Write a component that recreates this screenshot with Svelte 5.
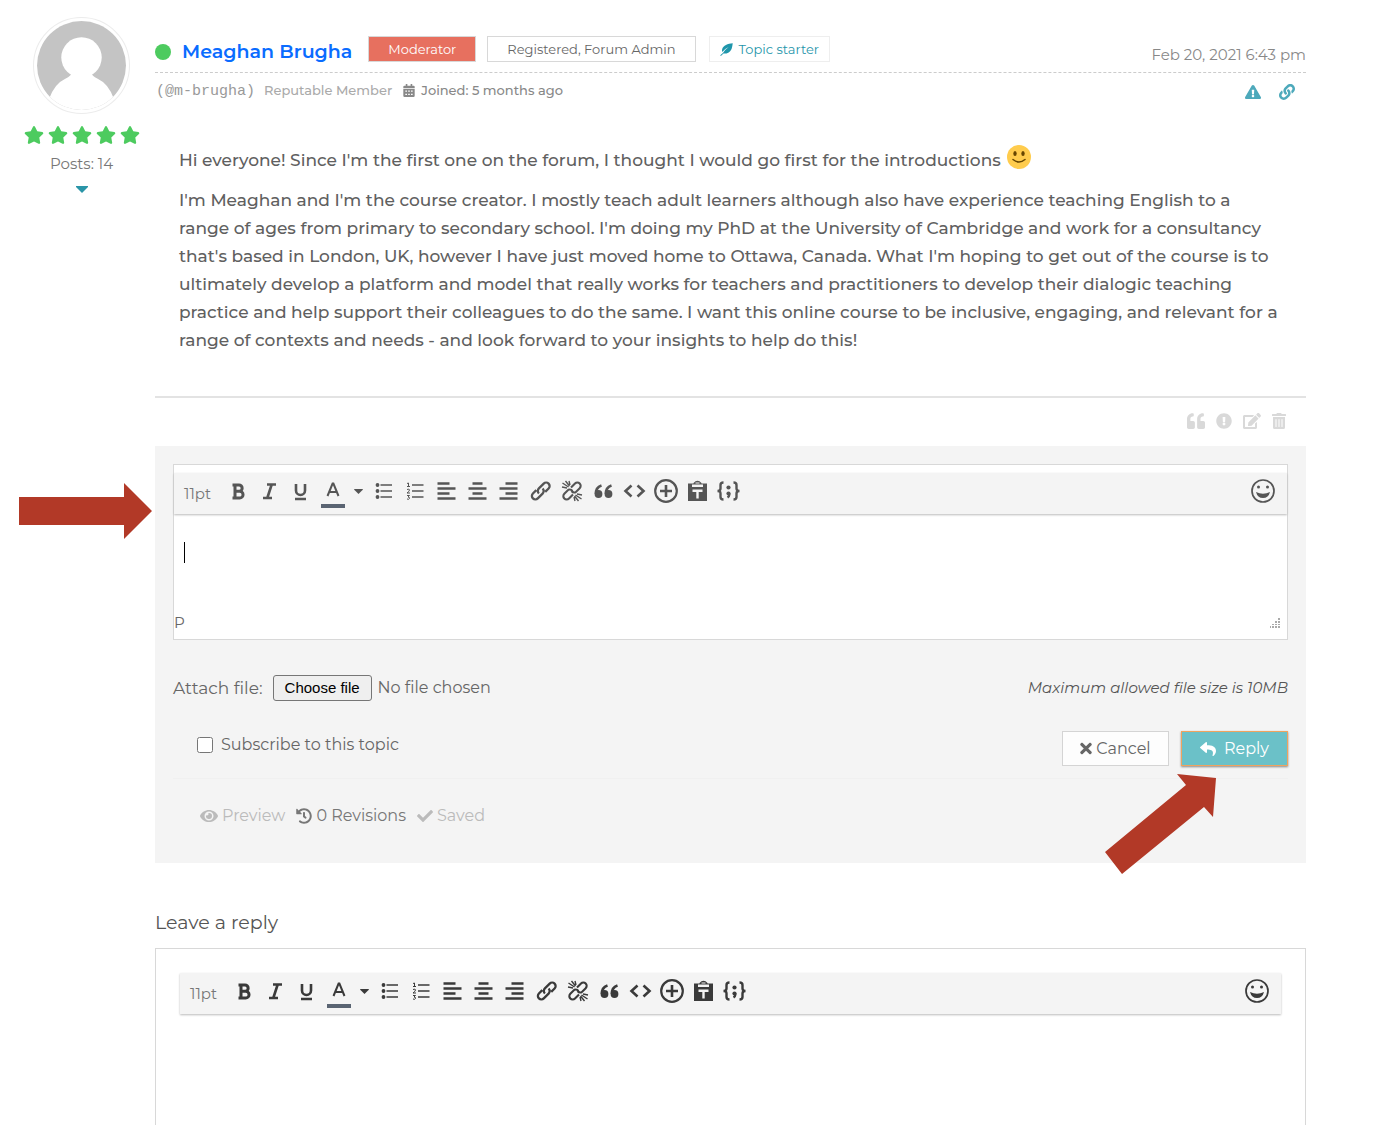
<script>
  let subscribed = $state(false);
  let message = $state('');
  let draft = $state('');
  let fileName = $state('No file chosen');

  const paths = {
    star: ['0 0 576 512', 'M259.3 17.8L194 150.2 47.9 171.5c-26.2 3.8-36.7 36.1-17.7 54.6l105.7 103-25 145.5c-4.5 26.3 23.2 46 46.4 33.7L288 439.6l130.7 68.7c23.2 12.2 50.9-7.4 46.4-33.7l-25-145.5 105.7-103c19-18.5 8.5-50.8-17.7-54.6L382 150.2 316.7 17.8c-11.7-23.6-45.6-23.9-57.4 0z'],
    link: ['0 0 512 512', 'M326.612 185.391c59.747 59.809 58.927 155.698.36 214.59-.11.12-.24.25-.36.37l-67.2 67.2c-59.27 59.27-155.699 59.262-214.96 0-59.27-59.26-59.27-155.7 0-214.96l37.106-37.106c9.84-9.84 26.786-3.3 27.294 10.606.648 17.722 3.826 35.527 9.69 52.721 1.986 5.822.567 12.262-3.783 16.612l-13.087 13.087c-28.026 28.026-28.905 73.66-1.155 101.96 28.024 28.579 74.086 28.749 102.325.51l67.2-67.19c28.191-28.191 28.073-73.757 0-101.83-3.701-3.694-7.429-6.564-10.341-8.569a16.037 16.037 0 0 1-6.947-12.606c-.396-10.567 3.348-21.456 11.698-29.806l21.054-21.055c5.521-5.521 14.182-6.199 20.584-1.731a152.482 152.482 0 0 1 20.522 17.197zM467.547 44.449c-59.261-59.262-155.69-59.27-214.96 0l-67.2 67.2c-.12.12-.25.25-.36.37-58.566 58.892-59.387 154.781.36 214.59a152.454 152.454 0 0 0 20.521 17.196c6.402 4.468 15.064 3.789 20.584-1.731l21.054-21.055c8.35-8.35 12.094-19.239 11.698-29.806a16.037 16.037 0 0 0-6.947-12.606c-2.912-2.005-6.64-4.875-10.341-8.569-28.073-28.073-28.191-73.639 0-101.83l67.2-67.19c28.239-28.239 74.3-28.069 102.325.51 27.75 28.3 26.872 73.934-1.155 101.96l-13.087 13.087c-4.35 4.35-5.769 10.79-3.783 16.612 5.864 17.194 9.042 34.999 9.69 52.721.509 13.906 17.454 20.446 27.294 10.606l37.106-37.106c59.271-59.259 59.271-155.699.001-214.959z'],
    warning: ['0 0 576 512', 'M569.517 440.013C587.975 472.007 564.806 512 527.94 512H48.054c-36.937 0-59.999-40.055-41.577-71.987L246.423 23.985c18.467-32.009 64.72-31.951 83.154 0l239.94 416.028zM288 354c-25.405 0-46 20.595-46 46s20.595 46 46 46 46-20.595 46-46-20.595-46-46-46zm-43.673-165.346l7.418 136c.347 6.364 5.609 11.346 11.982 11.346h48.546c6.373 0 11.635-4.982 11.982-11.346l7.418-136c.375-6.874-5.098-12.654-11.982-12.654h-63.383c-6.884 0-12.356 5.78-11.981 12.654z'],
    quote: ['0 0 512 512', 'M464 256h-80v-64c0-35.3 28.7-64 64-64h8c13.3 0 24-10.7 24-24V56c0-13.3-10.7-24-24-24h-8c-88.4 0-160 71.6-160 160v240c0 26.5 21.5 48 48 48h128c26.5 0 48-21.5 48-48V304c0-26.5-21.5-48-48-48zm-288 0H96v-64c0-35.3 28.7-64 64-64h8c13.3 0 24-10.7 24-24V56c0-13.3-10.7-24-24-24h-8C71.6 32 0 103.6 0 192v240c0 26.5 21.5 48 48 48h128c26.5 0 48-21.5 48-48V304c0-26.5-21.5-48-48-48z'],
    report: ['0 0 512 512', 'M504 256c0 136.997-111.043 248-248 248S8 392.997 8 256C8 119.083 119.043 8 256 8s248 111.083 248 248zm-248 50c-25.405 0-46 20.595-46 46s20.595 46 46 46 46-20.595 46-46-20.595-46-46-46zm-43.673-165.346l7.418 136c.347 6.364 5.609 11.346 11.982 11.346h48.546c6.373 0 11.635-4.982 11.982-11.346l7.418-136c.375-6.874-5.098-12.654-11.982-12.654h-63.383c-6.884 0-12.356 5.78-11.981 12.654z'],
    edit: ['0 0 576 512', 'M402.6 83.2l90.2 90.2c3.8 3.8 3.8 10 0 13.8L274.4 405.6l-92.8 10.3c-12.4 1.4-22.9-9.1-21.5-21.5l10.3-92.8L388.8 83.2c3.8-3.8 10-3.8 13.8 0zm162-22.9l-48.8-48.8c-15.2-15.2-39.9-15.2-55.2 0l-35.4 35.4c-3.8 3.8-3.8 10 0 13.8l90.2 90.2c3.8 3.8 10 3.8 13.8 0l35.4-35.4c15.2-15.3 15.2-40 0-55.2zM384 346.2V448H64V128h229.8c3.2 0 6.2-1.3 8.5-3.5l40-40c7.6-7.6 2.2-20.5-8.5-20.5H48C21.5 64 0 85.5 0 112v352c0 26.5 21.5 48 48 48h352c26.5 0 48-21.5 48-48V306.2c0-10.7-12.9-16-20.5-8.5l-40 40c-2.2 2.3-3.5 5.3-3.5 8.5z'],
    trash: ['0 0 448 512', 'M32 464a48 48 0 0 0 48 48h288a48 48 0 0 0 48-48V128H32zm272-256a16 16 0 0 1 32 0v224a16 16 0 0 1-32 0zm-96 0a16 16 0 0 1 32 0v224a16 16 0 0 1-32 0zm-96 0a16 16 0 0 1 32 0v224a16 16 0 0 1-32 0zM432 32H312l-9.4-18.7A24 24 0 0 0 281.1 0H166.8a23.72 23.72 0 0 0-21.4 13.3L136 32H16A16 16 0 0 0 0 48v32a16 16 0 0 0 16 16h416a16 16 0 0 0 16-16V48a16 16 0 0 0-16-16z'],
    eye: ['0 0 576 512', 'M572.52 241.4C518.29 135.59 410.93 64 288 64S57.68 135.64 3.48 241.41a32.35 32.35 0 0 0 0 29.19C57.71 376.41 165.07 448 288 448s230.32-71.64 284.52-177.41a32.35 32.35 0 0 0 0-29.19zM288 400a144 144 0 1 1 144-144 143.93 143.93 0 0 1-144 144zm0-240a95.31 95.31 0 0 0-25.31 3.79 47.85 47.85 0 0 1-66.9 66.9A95.78 95.78 0 1 0 288 160z'],
    history: ['0 0 512 512', 'M504 255.531c.253 136.64-111.18 248.372-247.82 248.468-59.015.042-113.223-20.53-155.822-54.911-11.077-8.94-11.905-25.541-1.839-35.607l11.267-11.267c8.609-8.609 22.353-9.551 31.891-1.984C173.062 425.135 212.781 440 256 440c101.705 0 184-82.311 184-184 0-101.705-82.311-184-184-184-48.814 0-93.149 18.969-126.068 49.932l50.754 50.754c10.08 10.08 2.941 27.314-11.313 27.314H24c-8.837 0-16-7.163-16-16V38.627c0-14.254 17.234-21.393 27.314-11.314l49.372 49.372C129.209 34.136 189.552 8 256 8c136.81 0 247.747 110.78 248 247.531zm-180.912 78.784l9.823-12.63c8.138-10.463 6.253-25.542-4.21-33.679L288 256.349V152c0-13.255-10.745-24-24-24h-16c-13.255 0-24 10.745-24 24v135.651l65.409 50.874c10.463 8.137 25.541 6.253 33.679-4.21z'],
    check: ['0 0 512 512', 'M173.898 439.404l-166.4-166.4c-9.997-9.997-9.997-26.206 0-36.204l36.203-36.204c9.997-9.998 26.207-9.998 36.204 0L192 312.69 432.095 72.596c9.997-9.997 26.207-9.997 36.204 0l36.203 36.204c9.997 9.997 9.997 26.206 0 36.204l-294.4 294.401c-9.998 9.997-26.207 9.997-36.204-.001z'],
    times: ['0 60 352 392', 'M242.72 256l100.07-100.07c12.28-12.28 12.28-32.19 0-44.48l-22.24-22.24c-12.28-12.28-32.19-12.28-44.48 0L176 189.28 75.93 89.21c-12.28-12.28-32.19-12.28-44.48 0L9.21 111.45c-12.28 12.28-12.28 32.19 0 44.48L109.28 256 9.21 356.07c-12.28 12.28-12.28 32.19 0 44.48l22.24 22.24c12.28 12.28 32.2 12.28 44.48 0L176 322.72l100.07 100.07c12.28 12.28 32.2 12.28 44.48 0l22.24-22.24c12.28-12.28 12.28-32.19 0-44.48L242.72 256z'],
    reply: ['0 0 512 512', 'M8.309 189.836L184.313 37.851C199.719 24.546 224 35.347 224 56.015v80.053c160.629 1.839 288 34.032 288 186.258 0 61.441-39.581 122.309-83.333 154.132-13.653 9.931-33.111-2.533-28.077-18.631 45.344-145.012-21.507-183.51-176.59-185.742V360c0 20.7-24.3 31.453-39.687 18.164l-176.004-152c-11.071-9.562-11.086-26.753 0-36.328z'],
    calendar: ['0 0 14 16', 'M3 0h2v2h4V0h2v2h1.500a1.500 1.500 0 0 1 1.500 1.500V5H0V3.500A1.500 1.500 0 0 1 1.500 2H3zM0 5.800h14v8.700a1.500 1.500 0 0 1-1.500 1.500h-11A1.500 1.500 0 0 1 0 14.500zM2.500 8v1.500h2V8zM6 8v1.500h2V8zM9.500 8v1.500h2V8zM2.500 12v1.500h2V12zM6 12v1.500h2V12zM9.500 12v1.500h2V12z'],
    feather: ['0 0 16 16', 'M15.700.3C9.500.8 4 3 2.700 7.300q-.6 2 .1 3.900Q6 7 10.700 5 6.500 8 3.600 12.200L.3 15.200l.8.8 3.200-3.200C10 14.200 13.500 10 14.500 6.500q.8-3 1.200-6.200z'],
    caret: ['0 0 12 7', 'M0 0h12v1L6 7 0 1z']
  };

  const tools = ['Bullet list', 'Numbered list', 'Align left', 'Align center', 'Align right', 'Insert link', 'Remove link', 'Blockquote', 'Code', 'Spoiler', 'Paste as text', 'Source code'];

  const postActions = [
    ['quote', 'Quote'],
    ['report', 'Report'],
    ['edit', 'Edit'],
    ['trash', 'Delete']
  ];

  function pickFile(event) {
    fileName = event.currentTarget.files[0]?.name ?? 'No file chosen';
  }
</script>

{#snippet icon(name)}
  <svg class="icon icon-{name}" viewBox={paths[name][0]} aria-hidden="true"><path fill-rule="evenodd" d={paths[name][1]} /></svg>
{/snippet}

{#snippet toolIcon(name)}
  <svg class="tool" viewBox="0 0 24 24" fill="none" stroke="currentColor" stroke-width="2" aria-hidden="true">
    {#if name === 'Bold'}
      <path stroke-width="3" d="M8 5.500v14M5.500 6h6.500a3 3 0 0 1 0 6.300H8M8 12.300h4.700a3.300 3.300 0 0 1 0 6.700H5.500" />
    {:else if name === 'Italic'}
      <path stroke-width="2.600" d="M9 5.500h9M5 19h9M13.700 5.500l-4.400 13.500" />
    {:else if name === 'Underline'}
      <path stroke-width="2.600" d="M7 5v6.500a4.500 4.500 0 0 0 9 0V5M6 20h11" />
    {:else if name === 'Text color'}
      <path d="M6.500 18L11.600 5.500h.8L17.500 18M8.500 14h7" />
    {:else if name === 'Bullet list'}
      <path stroke-width="1.500" d="M8.500 6h11.500M8.500 12h11.500M8.500 18h11.500" />
      <g fill="currentColor" stroke="none"><circle cx="5.500" cy="6" r="1.900" /><circle cx="5.500" cy="12" r="1.900" /><circle cx="5.500" cy="18" r="1.900" /></g>
    {:else if name === 'Numbered list'}
      <path stroke-width="1.500" d="M9 6h11.500M9 12h11.500M9 18h11.500" />
      <path stroke-width="1" d="M4 4.500L5.500 4v3.500M4 7.500h3M4 10.500q2.500-1 2.500.400T4 14h3M4 16.500h2.500L5 18q2 .2 1.500 1.500T4 20" />
    {:else if name === 'Align left'}
      <path stroke-width="2.300" d="M2.500 4.500h12M2.500 9.500h18M2.500 14.500h12M2.500 19.500h18" />
    {:else if name === 'Align center'}
      <path stroke-width="2.300" d="M6.500 4.500h10M2.500 9.500h18M6.500 14.500h10M2.500 19.500h18" />
    {:else if name === 'Align right'}
      <path stroke-width="2.300" d="M8.500 4.500h12M2.500 9.500h18M8.500 14.500h12M2.500 19.500h18" />
    {:else if name === 'Insert link'}
      <path stroke-width="2.300" d="M9.900 14.500a3.600 3.600 0 0 1 0-5.100l4.800-4.800a3.400 3.400 0 0 1 4.900 4.900l-3.400 3.400M13.600 9.500a3.600 3.600 0 0 1 0 5.100l-4.800 4.800a3.400 3.400 0 0 1-4.900-4.900l3.400-3.400" />
    {:else if name === 'Remove link'}
      <path stroke-width="2.100" d="M11 8.500l4-4a3.200 3.200 0 0 1 4.700 4.700l-4 4q-2.500 1-4.200-1.200M13 15.500l-4 4a3.200 3.200 0 0 1-4.700-4.700l4-4q2.500-1 4.200 1.200" />
      <path stroke-width="1.400" d="M2.500 4l6 4M5.500 2l4 5M9 2l1 4M2 8l5 1M21.500 20l-6-4M18.500 22l-4-5M15 22l-1-4M22 16l-5-1" />
    {:else if name === 'Blockquote'}
      <g fill="currentColor" stroke="none"><circle cx="6.500" cy="15" r="3.900" /><circle cx="16.500" cy="15" r="3.900" /></g>
      <path stroke-width="2.600" d="M4 15Q3.500 8.500 9.500 6.500M14 15Q13.500 8.500 19.500 6.500" />
    {:else if name === 'Code'}
      <path stroke-width="2.600" d="M8.500 6.500L2.500 12l6 5.500M14.500 6.500l6 5.500-6 5.500" />
    {:else if name === 'Spoiler'}
      <circle cx="12" cy="12" r="10.800" stroke-width="2.200" /><path stroke-width="2.600" d="M12 6v12M6 12h12" />
    {:else if name === 'Paste as text'}
      <path fill="currentColor" stroke="none" fill-rule="evenodd" d="M2 4.500h5.500V4q4-4.500 8 0v.5H21V22H2zM9.500 3.500v1h4v-1zM6 5.500v2.500h11V5.500zM6.500 10.500V13h3.800v6.500h2.400V13h3.800v-2.500z" />
    {:else if name === 'Source code'}
      <path stroke-width="2.400" d="M6.500 3.500Q3.500 3.500 3.500 6v3.500Q3.500 12 .5 12q3 0 3 2.500V18q0 2.500 3 2.500M16.500 3.500q3 0 3 2.500v3.500q0 2.500 3 2.500-3 0-3 2.500V18q0 2.500-3 2.500M12.200 14.500v1.500q0 1.500-1.700 2.500" />
      <g fill="currentColor" stroke="none"><circle cx="11.500" cy="8.500" r="2.100" /><circle cx="11.500" cy="14.500" r="2.100" /></g>
    {:else if name === 'Emoticons'}
      <circle cx="12" cy="12" r="11" stroke-width="1.700" />
      <g fill="currentColor" stroke="none"><circle cx="7.500" cy="8" r="1.500" /><circle cx="16.500" cy="8" r="1.500" /><path d="M5 13q7 3.500 14 0-1.500 6-7 6t-7-6z" /></g>
    {/if}
  </svg>
{/snippet}

{#snippet toolbar()}
  <div class="toolbar" role="toolbar" aria-label="Text formatting">
    <button type="button" class="size">11pt</button>
    <div class="styles">
      {#each ['Bold', 'Italic', 'Underline'] as name}
        <button type="button" aria-label={name}>{@render toolIcon(name)}</button>
      {/each}
    </div>
    <button type="button" class="color" aria-label="Text color">{@render toolIcon('Text color')}</button>
    <button type="button" class="more" aria-label="Choose text color">{@render icon('caret')}</button>
    <div class="tools">
      {#each tools as name}
        <button type="button" aria-label={name}>{@render toolIcon(name)}</button>
      {/each}
    </div>
    <button type="button" class="emoticons" aria-label="Emoticons">{@render toolIcon('Emoticons')}</button>
  </div>
{/snippet}

<main>
  <aside>
    <svg class="avatar" viewBox="0 0 96 96" role="img" aria-label="Avatar">
      <defs><clipPath id="avatar-clip"><circle cx="48" cy="48" r="44" /></clipPath></defs>
      <circle cx="48" cy="48" r="47.500" fill="#fff" stroke="#ececec" />
      <g clip-path="url(#avatar-clip)">
        <path fill="#c4c4c4" d="M0 0h96v96H0z" />
        <ellipse cx="48" cy="40" rx="20" ry="20" fill="#fff" />
        <path fill="#fff" d="M38 54h20q-1 4 6 7 11 5 16 20l4 19H12l4-19q5-15 16-20 7-3 6-7z" />
      </g>
    </svg>
    <div class="stars" role="img" aria-label="5 stars">
      {#each Array(5) as _}{@render icon('star')}{/each}
    </div>
    <span class="posts">Posts: 14</span>
    <button type="button" class="expand" aria-label="Show author details">{@render icon('caret')}</button>
  </aside>

  <div class="column">
    <article>
      <header>
        <span class="online"></span>
        <a class="name" href="#profile">Meaghan Brugha</a>
        <span class="badge moderator">Moderator</span>
        <span class="badge">Registered, Forum Admin</span>
        <span class="badge starter">{@render icon('feather')}Topic starter</span>
        <time datetime="2021-02-20T18:43">Feb 20, 2021 6:43 pm</time>
      </header>
      <div class="meta">
        <span class="handle">(@m-brugha)</span>
        <span>Reputable Member</span>
        <span class="joined">{@render icon('calendar')}Joined: 5 months ago</span>
        <div class="links">
          <a href="#report" aria-label="Report post">{@render icon('warning')}</a>
          <a href="#post" aria-label="Link to post">{@render icon('link')}</a>
        </div>
      </div>
      <div class="body">
        <p>
          Hi everyone! Since I'm the first one on the forum, I thought I would go first for the introductions
          <svg class="emoji" viewBox="0 0 24 24" role="img" aria-label="Smile"><circle cx="12" cy="12" r="12" fill="#ffcc4d" /><ellipse cx="8" cy="8.500" rx="1.700" ry="2.500" fill="#664500" /><ellipse cx="16" cy="8.500" rx="1.700" ry="2.500" fill="#664500" /><path d="M6 14.500q6 5 12 0" fill="none" stroke="#664500" stroke-width="1.500" stroke-linecap="round" /></svg>
        </p>
        <p>
          I'm Meaghan and I'm the course creator. I mostly teach adult learners although also have experience teaching English to a<br />
          range of ages from primary to secondary school. I'm doing my PhD at the University of Cambridge and work for a consultancy<br />
          that's based in London, UK, however I have just moved home to Ottawa, Canada. What I'm hoping to get out of the course is to<br />
          ultimately develop a platform and model that really works for teachers and practitioners to develop their dialogic teaching<br />
          practice and help support their colleagues to do the same. I want this online course to be inclusive, engaging, and relevant for a<br />
          range of contexts and needs - and look forward to your insights to help do this!
        </p>
      </div>
      <footer>
        {#each postActions as [name, label]}
          <button type="button" aria-label={label}>{@render icon(name)}</button>
        {/each}
      </footer>
    </article>

    <form class="reply" onsubmit={(e) => e.preventDefault()}>
      <div class="editor">
        {@render toolbar()}
        <div class="field">
          <textarea aria-label="Reply message" bind:value={message}></textarea>
          <span class="cursor"></span>
        </div>
        <div class="status">
          <span>P</span>
          <svg viewBox="0 0 10 10" aria-hidden="true"><path fill="#aaa" d="M8 0h2v2H8zM8 3h2v2H8zM5 3h2v2H5zM8 6h2v1H8zM5 6h2v1H5zM8 8h2v2H8zM5 8h2v2H5zM2 6h2v1H2zM2 8h2v2H2zM0 8h1v2H0z" /></svg>
        </div>
      </div>
      <div class="attach">
        <span>Attach file:</span>
        <input id="attachment" type="file" onchange={pickFile} />
        <label class="choose" for="attachment">Choose file</label>
        <span class="file">{fileName}</span>
        <em>Maximum allowed file size is 10MB</em>
      </div>
      <div class="submit">
        <label><input type="checkbox" bind:checked={subscribed} />Subscribe to this topic</label>
        <button type="button" class="cancel">{@render icon('times')}Cancel</button>
        <button type="submit" class="send">{@render icon('reply')}Reply</button>
      </div>
      <div class="drafts">
        <button type="button">{@render icon('eye')}Preview</button>
        <button type="button" class="revisions">{@render icon('history')}0 Revisions</button>
        <span>{@render icon('check')}Saved</span>
      </div>
      <svg class="arrow arrow-editor" viewBox="0 0 133 56" aria-hidden="true"><path d="M0 14h105V0l28 28-28 28V42H0z" /></svg>
      <svg class="arrow arrow-send" viewBox="0 0 112 100" aria-hidden="true"><path d="M111 4L72 0l9 11L0 78l17 22 82-67 9 10z" /></svg>
    </form>

    <h2>Leave a reply</h2>
    <form class="topic" onsubmit={(e) => e.preventDefault()}>
      {@render toolbar()}
      <textarea aria-label="Leave a reply" bind:value={draft}></textarea>
    </form>
  </div>
</main>

<style>
  :global(body) {
    background: #fff;
  }

  main {
    display: grid;
    grid-template-columns: 115px minmax(0, 1fr);
    column-gap: 16px;
    padding: 17px 91px 0 24px;
    box-sizing: border-box;
    min-height: 100vh;
    font-family: Montserrat, Inter, sans-serif;
    font-size: 16px;
    line-height: 24px;
    color: #666;
  }

  .column {
    display: flex;
    flex-direction: column;
  }

  button {
    display: inline-flex;
    align-items: center;
    justify-content: center;
    padding: 0;
    border: 0;
    background: none;
    font: inherit;
    color: inherit;
    cursor: pointer;
  }

  a {
    text-decoration: none;
  }

  .icon {
    width: 16px;
    height: 16px;
    flex: none;
    fill: currentColor;
  }

  aside {
    display: flex;
    flex-direction: column;
    align-items: center;
  }

  .avatar {
    width: 97px;
    height: 97px;
  }

  .stars {
    display: flex;
    gap: 4px;
    margin: 12px 0 8px;
    color: #4dcb5f;
  }

  .icon-star {
    width: 20px;
    height: 18px;
  }

  .posts {
    font-size: 15px;
    color: #777;
  }

  .expand {
    margin-top: 10px;
    color: #2a95a8;
  }

  .icon-caret {
    width: 12px;
    height: 7px;
  }

  header {
    display: flex;
    align-items: center;
    height: 56px;
    padding-top: 14px;
    box-sizing: border-box;
    border-bottom: 1px dashed #ccc;
    white-space: nowrap;
  }

  .online {
    width: 16px;
    height: 16px;
    margin-right: 11px;
    border-radius: 50%;
    background: #4dcb5f;
  }

  .name {
    margin-right: 16px;
    font-size: 19px;
    font-weight: 600;
    color: #0a6cff;
  }

  .badge {
    display: flex;
    align-items: center;
    height: 26px;
    margin: 0 11px 5px 0;
    padding: 0 19px;
    box-sizing: border-box;
    border: 1px solid #d8d8d8;
    font-size: 13px;
    line-height: 22px;
  }

  .moderator {
    background: #e7705f;
    color: #fff;
  }

  .starter {
    gap: 6px;
    margin-left: 2px;
    padding: 0 10px;
    border-color: #eee;
    color: #1f96ab;
  }

  .icon-feather {
    width: 13px;
    height: 13px;
  }

  time {
    margin-left: auto;
    padding-top: 6px;
    font-size: 15px;
    color: #888;
  }

  .meta {
    display: flex;
    align-items: center;
    gap: 9px;
    height: 34px;
    font-size: 13px;
    font-weight: 500;
    color: #aaa;
  }

  .handle {
    padding: 4px 0 0 1px;
    font-family: "Liberation Mono", monospace;
    font-size: 15px;
    font-weight: 400;
    color: #999;
  }

  .joined {
    display: flex;
    align-items: center;
    gap: 6px;
    padding-left: 2px;
    color: #888;
  }

  .icon-calendar {
    width: 12px;
    height: 13px;
  }

  .links {
    display: flex;
    gap: 18px;
    margin-left: auto;
    padding: 3px 11px 0 0;
    color: #4da9bb;
  }

  .links a {
    display: flex;
    color: inherit;
  }

  .body {
    padding: 38px 24px 42px;
    font-size: 17px;
    font-weight: 500;
    line-height: 28px;
    color: #606060;
  }

  .body p {
    margin: 0 0 12px;
    white-space: nowrap;
  }

  .body p:last-child {
    margin: 0;
  }

  .emoji {
    width: 24px;
    height: 24px;
    margin-left: 2px;
    vertical-align: -3px;
  }

  footer {
    display: flex;
    align-items: center;
    justify-content: flex-end;
    gap: 11px;
    height: 50px;
    padding: 0 20px 2px 0;
    box-sizing: border-box;
    border-top: 2px solid #e3e3e3;
    color: #d9d9d9;
  }

  .icon-quote,
  .icon-edit,
  .icon-eye {
    width: 18px;
  }

  .icon-quote {
    height: 18px;
  }

  .icon-trash {
    width: 14px;
  }

  .reply {
    position: relative;
    padding: 18px 18px 35px;
    background: #f4f4f4;
  }

  .editor {
    padding-top: 8px;
    border: 1px solid #d8d8d8;
    background: #fff;
  }

  .toolbar {
    display: flex;
    align-items: center;
    height: 41px;
    padding: 0 12px 5px 10px;
    box-sizing: border-box;
    background: #f4f4f4;
    box-shadow: 0 1px 2px #bbb;
    color: #555;
  }

  .topic .toolbar {
    color: #3a3a3a;
  }

  .size {
    width: 39px;
    justify-content: flex-start;
    padding-top: 6px;
    font-size: 15px;
    color: #777;
  }

  .styles {
    display: grid;
    grid-template-columns: repeat(3, 1fr);
    width: 93px;
  }

  .tool {
    width: 24px;
    height: 24px;
  }

  .color {
    width: 24px;
    height: 32px;
    margin: 2px 3px 0 5px;
    box-sizing: border-box;
    border-bottom: 4px solid #5a6472;
  }

  .more {
    width: 20px;
  }

  .more .icon {
    width: 9px;
    height: 5px;
  }

  .tools {
    display: grid;
    grid-template-columns: repeat(12, 1fr);
    width: 377px;
  }

  .emoticons {
    margin-left: auto;
  }

  .field {
    position: relative;
    height: 92px;
  }

  textarea {
    display: block;
    width: 100%;
    height: 100%;
    padding: 26px 11px 0;
    box-sizing: border-box;
    border: 0;
    outline: 0;
    resize: none;
    background: transparent;
    font: inherit;
  }

  .cursor {
    position: absolute;
    top: 28px;
    left: 10px;
    width: 1px;
    height: 21px;
    background: #000;
  }

  .status {
    display: flex;
    align-items: center;
    justify-content: space-between;
    height: 33px;
    padding-right: 7px;
    font-size: 15px;
  }

  .status svg {
    width: 10px;
    height: 10px;
  }

  .attach {
    display: flex;
    align-items: center;
    height: 26px;
    margin-top: 35px;
  }

  .attach span:first-child {
    font-size: 17px;
  }

  .attach input {
    position: absolute;
    width: 1px;
    height: 1px;
    opacity: 0;
  }

  .choose {
    margin: 0 6px 0 10px;
    padding: 0 11px;
    border: 1px solid #767676;
    border-radius: 3px;
    background: #efefef;
    font-family: "Liberation Sans", Arial, sans-serif;
    font-size: 15px;
    color: #000;
  }

  em {
    margin-left: auto;
    font-size: 15px;
    color: #555;
  }

  .submit {
    display: flex;
    align-items: center;
    gap: 12px;
    padding: 30px 0 12px;
    border-bottom: 1px solid #f0f0f0;
  }

  .submit label {
    display: flex;
    align-items: center;
    gap: 8px;
    margin: 0 auto 8px 0;
    padding-left: 24px;
  }

  .submit input {
    width: 16px;
    height: 16px;
    margin: 0;
  }

  .cancel,
  .send {
    height: 35px;
    width: 107px;
    border: 1px solid #d4d4d4;
    background: #fdfdfd;
    gap: 4px;
  }

  .send {
    gap: 8px;
    border-color: #f0a35e;
    background: #6bc1c8;
    box-shadow: 0 1px 2px #888;
    color: #fff;
  }

  .icon-times {
    width: 12px;
    height: 13px;
  }

  .drafts {
    display: flex;
    gap: 11px;
    padding: 25px 0 0 27px;
    color: #bbb;
  }

  .drafts button,
  .drafts span {
    display: inline-flex;
    align-items: center;
    gap: 4px;
  }

  .drafts .revisions {
    color: #777;
  }

  .arrow {
    position: absolute;
    fill: #b23927;
  }

  .arrow-editor {
    left: -136px;
    top: 37px;
    width: 133px;
  }

  .arrow-send {
    right: 89px;
    top: 328px;
    width: 112px;
  }

  h2 {
    margin: 47px 0 12px;
    font-size: 19px;
    font-weight: 400;
    line-height: 26px;
    color: #555;
  }

  .topic {
    display: flex;
    flex: 1;
    flex-direction: column;
    padding: 24px 24px 0;
    border: 1px solid #d8d8d8;
    border-bottom: 0;
  }

  .topic textarea {
    flex: 1;
    min-height: 80px;
  }
</style>
